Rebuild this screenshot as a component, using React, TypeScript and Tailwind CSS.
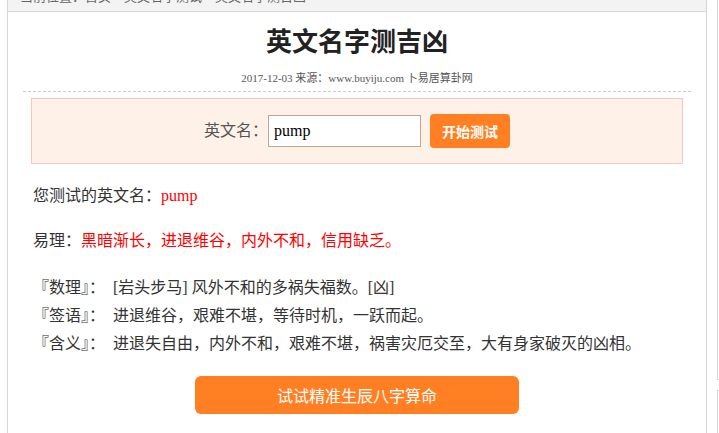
import React from "react";

const serif = { fontFamily: '"Liberation Serif", "Noto Sans CJK SC", serif' };
const sans = { fontFamily: '"Noto Sans CJK SC", "Liberation Sans", sans-serif' };

export default function App() {
  return (
    <div className="flex w-[719px] h-[433px] overflow-hidden bg-white">
      <div className="ml-[7px] w-[700px] shrink-0 h-full border-x border-[#d6d6d6] flex flex-col">
        <div className="h-[12px] shrink-0 bg-[#f3f3f3] border-b border-[#d6d6d6] overflow-hidden">
          <div className="mt-[-12px] pl-[12px] text-[13px] leading-[16px] text-[#666] whitespace-nowrap" style={sans}>
            当前位置：首页 &gt; 英文名字测试 &gt; 英文名字测吉凶
          </div>
        </div>
        <h1 className="mt-[10px] text-center text-[26px] leading-[36px] font-bold text-[#222]" style={sans}>
          英文名字测吉凶
        </h1>
        <div className="mt-[12px] text-center text-[11px] leading-[16px] text-[#555]" style={serif}>
          2017-12-03 来源：www.buyiju.com 卜易居算卦网
        </div>
        <div className="mt-[5px] mx-[15px] border-b border-dashed border-[#cccccc]" />
        <div className="mt-[6px] mx-[23px] h-[66px] border border-[#f8c6c6] bg-[#fef1e8] flex items-center justify-center">
          <span className="text-[16px] text-[#555]" style={serif}>英文名：</span>
          <div className="w-[153px] h-[32px] border border-[#c8a290] bg-white flex items-center pl-[5px] text-[16px] text-black" style={serif}>
            pump
          </div>
          <button className="ml-[9px] w-[80px] h-[34px] rounded-[4px] bg-[#ff7f22] text-white text-[14px] font-bold" style={sans}>
            开始测试
          </button>
        </div>
        <div className="pl-[25px] text-[16px] leading-[28px] text-[#333]" style={serif}>
          <div className="mt-[18px]">
            您测试的英文名：<span className="text-[#ff0000]">pump</span>
          </div>
          <div className="mt-[17px]">
            易理：<span className="text-[#ff0000]">黑暗渐长，进退维谷，内外不和，信用缺乏。</span>
          </div>
          <div className="mt-[19px]">
            <div>『数理』：{"\u00a0\u00a0"}[岩头步马] 风外不和的多祸失福数。[凶]</div>
            <div>『签语』：{"\u00a0\u00a0"}进退维谷，艰难不堪，等待时机，一跃而起。</div>
            <div>『含义』：{"\u00a0\u00a0"}进退失自由，内外不和，艰难不堪，祸害灾厄交至，大有身家破灭的凶相。</div>
          </div>
        </div>
        <div className="mt-[18px] flex justify-center">
          <button className="w-[324px] h-[38px] rounded-[6px] bg-[#ff7f22] text-white text-[16px]" style={sans}>
            试试精准生辰八字算命
          </button>
        </div>
      </div>
      <div className="ml-[10px] w-[200px] shrink-0 flex flex-col">
        <div className="h-[380px] border-l border-b border-[#d6d6d6]" />
        <div className="mt-[10px] flex-1 border-l border-t border-[#d6d6d6]" />
      </div>
    </div>
  );
}
